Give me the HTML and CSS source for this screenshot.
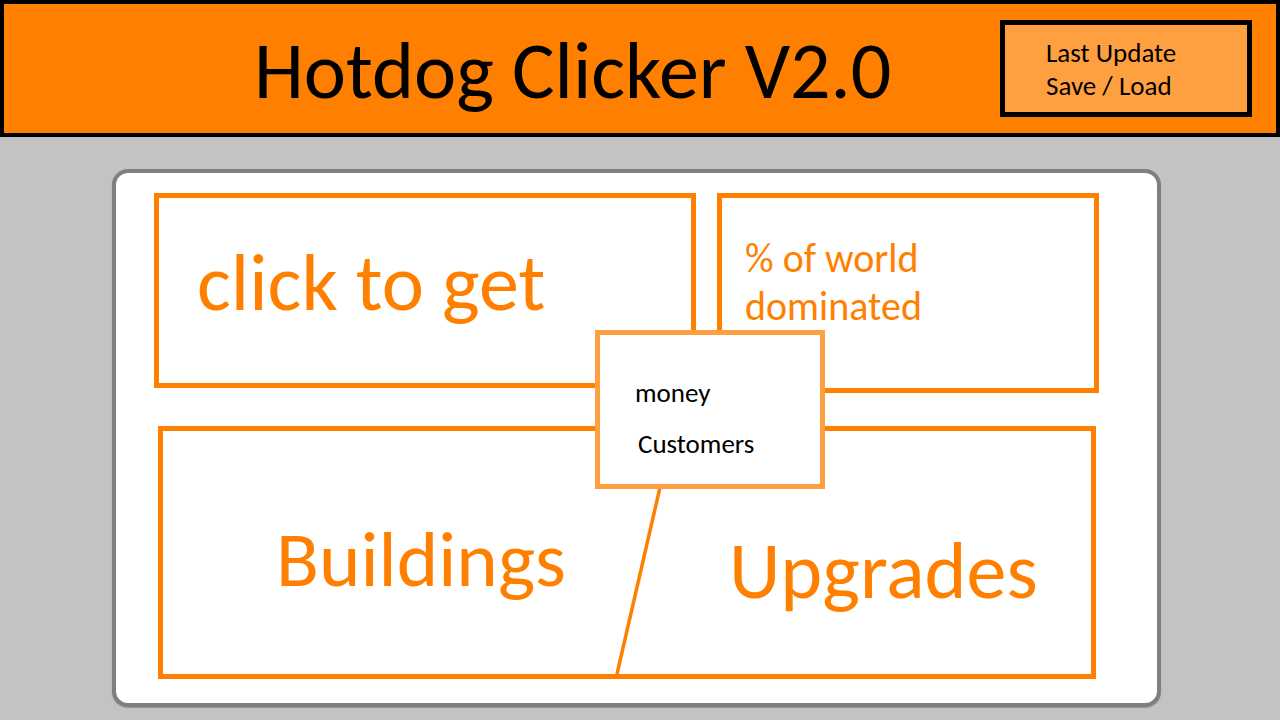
FILE: index.html
```html
<!DOCTYPE html>
<html lang="en">
<head>
<meta charset="utf-8">
<title>Hotdog Clicker V2.0</title>
<link rel="stylesheet" href="styles.css">
</head>
<body>
<header class="header">
  <h1 class="title">Hotdog Clicker V2.0</h1>
  <nav class="menu">
    <div class="menu-item">Last Update</div>
    <div class="menu-item">Save / Load</div>
  </nav>
</header>
<main class="card">
  <div class="row-top">
    <section class="box box-click"><span class="big">click to get</span></section>
    <section class="box box-world"><p class="mid">% of world<br>dominated</p></section>
  </div>
  <section class="box box-shop">
    <svg class="divider" width="928" height="243" viewBox="0 0 928 243" aria-hidden="true">
      <line x1="510" y1="0" x2="454" y2="243" stroke="#FF8000" stroke-width="3.5"/>
    </svg>
    <div class="half half-left"><span class="big">Buildings</span></div>
    <div class="half half-right"><span class="big">Upgrades</span></div>
  </section>
  <aside class="stats">
    <div class="stat stat-money">money</div>
    <div class="stat stat-customers">Customers</div>
  </aside>
</main>
</body>
</html>
```
FILE: styles.css
```css
* { box-sizing: border-box; }
html, body { margin: 0; padding: 0; }
body {
  width: 1280px;
  height: 720px;
  overflow: hidden;
  background: #C3C3C3;
  font-family: Carlito, "Open Sans", "DejaVu Sans", sans-serif;
}
.header {
  height: 137px;
  border: 4px solid #000;
  background: #FF8000;
  display: flex;
  align-items: flex-start;
}
.title {
  margin: 27px 0 0 250px;
  font-size: 80px;
  line-height: 80px;
  font-weight: normal;
  color: #000;
}
.menu {
  margin: 16px 24px 0 auto;
  width: 252px;
  height: 97px;
  border: 5px solid #000;
  background: #FFA040;
  padding: 11px 0 0 41px;
}
.menu-item {
  font-size: 27px;
  line-height: 33px;
  color: #000;
}
.card {
  position: relative;
  margin: 32px 0 0 112px;
  width: 1049px;
  height: 538px;
  border: 4px solid #7F7F7F;
  border-radius: 16px;
  background: #fff;
  box-shadow: 0 1px 1px rgba(0,0,0,0.25);
  padding: 20px 0 0 38px;
}
.row-top {
  display: flex;
  align-items: flex-start;
  gap: 21px;
}
.box {
  border: 5px solid #FF8000;
  color: #FF8000;
}
.big {
  font-size: 80px;
  line-height: 80px;
}
.box-click {
  width: 542px;
  height: 195px;
  padding: 45px 0 0 38px;
}
.box-world {
  width: 382px;
  height: 200px;
  padding: 37px 0 0 23px;
}
.mid {
  margin: 0;
  font-size: 40px;
  line-height: 48px;
}
.box-shop {
  position: relative;
  margin: 33px 0 0 4px;
  width: 938px;
  height: 253px;
  display: grid;
  grid-template-columns: 470px 1fr;
}
.divider {
  position: absolute;
  left: 0;
  top: 0;
}
.half-left { padding: 88px 0 0 113px; }
.half-right { padding: 100px 0 0 96px; }
.half-left .big { font-size: 79px; }
.stats {
  position: absolute;
  left: 479px;
  top: 157px;
  width: 230px;
  height: 159px;
  border: 5px solid #FFA040;
  background: #fff;
  padding: 32px 0 0 35px;
}
.stat {
  font-size: 27px;
  line-height: 51px;
  color: #000;
}
.stat-customers { margin-left: 3px; }
```
